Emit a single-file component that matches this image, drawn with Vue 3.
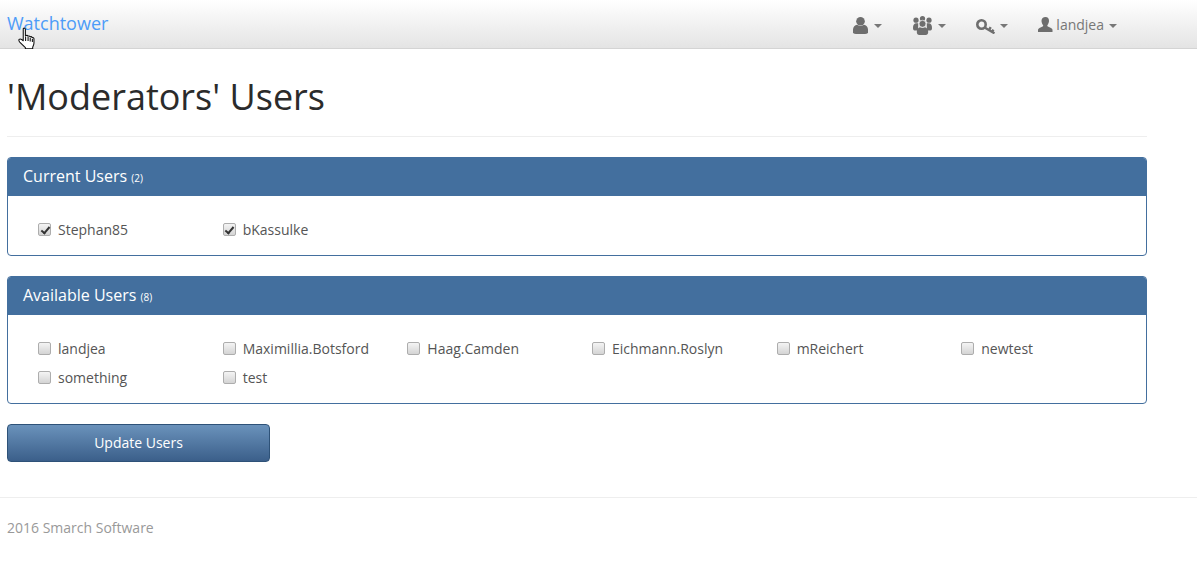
<template>
  <div class="page">
    <!-- navbar -->
    <nav class="navbar">
      <a class="brand">Watchtower</a>
      <svg class="cursor" width="18" height="22" viewBox="0 0 16 20.500">
        <path d="M4.500 1.500c.8-.8 2-.4 2 .8v6l.6-.3c.7-.3 1.500-.1 1.800.5.7-.3 1.600-.1 1.900.6.800-.3 1.700 0 2 .7.800-.2 1.700.3 1.700 1.200v4c0 1.500-.6 2.500-1.200 3.700v1.500H6.500v-1L1.200 14c-.8-1-1.100-1.700-.5-2.400.6-.6 1.600-.4 2.300.1l1.500 1.100V2.300z" fill="#fff" stroke="#111" stroke-width="1" stroke-linejoin="round"/>
        <path d="M6.700 9v4M9 9v4M11 10v3.500M13 11v3" stroke="#111" stroke-width="1" fill="none"/>
      </svg>
      <ul class="nav">
        <li class="nav-item first">
          <svg class="icon person" width="15" height="17" viewBox="0 0 15 17"><circle cx="7.500" cy="4.300" r="4.300" fill="#6e6e6e"/><path d="M0 16v-3.500C0 10 2 8.300 4 7.800c2 1.500 5 1.500 7 0 2 .5 4 2.200 4 4.700V16c-.8.600-2 1-3 1H3c-1 0-2.200-.4-3-1z" fill="#6e6e6e"/></svg>
          <span class="caret"></span>
        </li>
        <li class="nav-item">
          <svg class="icon people" width="19" height="19" viewBox="0 0 19 19">
            <g fill="#6e6e6e">
              <circle cx="3" cy="4.200" r="2.600"/>
              <circle cx="9.500" cy="2.600" r="2.600"/>
              <circle cx="16" cy="4.200" r="2.600"/>
              <path d="M0 12c0-3 1-4.500 2.800-4.800h2.500L5 14.500H1.500C.5 14.500 0 13.500 0 12zM19 12c0-3-1-4.500-2.800-4.800h-2.500l.3 7.300h3.500c1 0 1.500-1 1.500-2.500z"/>
            </g>
            <circle cx="9.500" cy="7.800" r="3.500" fill="#6e6e6e" stroke="#eee" stroke-width=".8"/>
            <path d="M3.800 16c0-3 1.500-4.500 3.200-4.800 1.500 1 3.500 1 5 0 1.700.3 3.200 1.800 3.200 4.800 0 2-1 3-2.500 3H6.300c-1.500 0-2.500-1-2.500-3z" fill="#6e6e6e"/>
          </svg>
          <span class="caret"></span>
        </li>
        <li class="nav-item">
          <svg class="icon key" width="19" height="15" viewBox="0 0 19 15"><circle cx="5.500" cy="5.500" r="4.200" fill="none" stroke="#6e6e6e" stroke-width="2.600"/><path d="M9 8.800l9.500 5.500M13 11.200l1.700-3M16 13l1.400-2.400" fill="none" stroke="#6e6e6e" stroke-width="2.400"/></svg>
          <span class="caret short"></span>
        </li>
        <li class="nav-item">
          <svg class="icon account" width="15" height="15" viewBox="0 0 15 15"><path d="M7.500 0c2.300 0 3.500 1.700 3.500 3.800 0 1.600-.7 3.300-1.500 4.200-.4.500-.2 1.200.4 1.500l3.100 1.500c1 .5 1.500 1.200 1.500 2V15H0v-2c0-.8.500-1.500 1.500-2l3.100-1.500c.6-.3.800-1 .4-1.500C4.200 7.100 3.500 5.400 3.500 3.800 3.500 1.700 5.200 0 7.500 0z" fill="#6e6e6e"/></svg>
          <span class="name">landjea</span>
          <span class="caret short"></span>
        </li>
      </ul>
    </nav>

    <main class="content">
      <h1 class="title">'Moderators' Users</h1>

      <section v-for="group in groups" :key="group.title" class="panel">
        <div class="panel-heading">
          {{ group.title }} <small>({{ group.users.length }})</small>
        </div>
        <div class="panel-body">
          <label v-for="user in group.users" :key="user" class="user">
            <input type="checkbox" :checked="group.checked" />
            <span>{{ user }}</span>
          </label>
        </div>
      </section>

      <button class="update">Update Users</button>
    </main>

    <footer class="footer">2016 Smarch Software</footer>
  </div>
</template>

<script setup>
const groups = [
  { title: 'Current Users', checked: true, users: ['Stephan85', 'bKassulke'] },
  {
    title: 'Available Users',
    checked: false,
    users: ['landjea', 'Maximillia.Botsford', 'Haag.Camden', 'Eichmann.Roslyn', 'mReichert', 'newtest', 'something', 'test']
  }
]
</script>

<style>
html, body {
  margin: 0;
  background: #fff;
}
</style>

<style scoped>
.page {
  font-family: "Open Sans", "Liberation Sans", sans-serif;
  font-size: 14px;
  color: #555;
  height: 568px;
  overflow: hidden;
  position: relative;
}

.navbar {
  height: 48px;
  border-bottom: 1px solid #d4d4d4;
  background: linear-gradient(#fff, #e4e4e4);
  display: flex;
  align-items: center;
  padding-left: 7px;
  position: relative;
}

.brand {
  font-size: 18px;
  color: #4d9cf8;
  margin-bottom: 2px;
}

.cursor {
  position: absolute;
  left: 18px;
  top: 27px;
}

.nav {
  list-style: none;
  margin: 0 0 0 auto;
  padding: 0 80px 0 0;
  display: flex;
  align-items: center;
  gap: 30px;
}

.nav-item {
  display: flex;
  align-items: center;
  color: #777;
}

.first { margin-right: 1px; }

.person { margin-top: 3px; }
.people { margin-top: 3px; }
.key { margin-top: 5px; }
.account { margin-top: 1px; }

.name {
  margin-left: 3.500px;
}

.caret {
  margin: 3px 0 0 6px;
  border-top: 4px solid #777;
  border-left: 4px solid transparent;
  border-right: 4px solid transparent;
}

.caret.short {
  margin-left: 5px;
}

.content {
  width: 1140px;
  margin-left: 7px;
}

.title {
  font-size: 36px;
  font-weight: 400;
  line-height: 40px;
  color: #2b2b2b;
  margin: 0 0 20px;
  padding: 28px 0 19px;
  border-bottom: 1px solid #eee;
}

.panel {
  border: 1px solid #436f9e;
  border-radius: 4px;
  margin-bottom: 20px;
  overflow: hidden;
}

.panel-heading {
  background: #436f9e;
  color: #fff;
  font-size: 16px;
  line-height: 22px;
  padding: 7px 15px 9px;
}

.panel-heading small {
  font-size: 10px;
  line-height: 1;
}

.panel-body {
  padding: 19px 15px 11px;
  display: grid;
  grid-template-columns: repeat(6, 184.67px);
}

.user {
  display: flex;
  align-items: center;
  height: 29px;
  padding-left: 15px;
}

.user input {
  appearance: none;
  width: 13px;
  height: 13px;
  margin: 0 7px 0 0;
  border: 1px solid #adadad;
  border-radius: 2px;
  background: linear-gradient(#f4f4f4, #d4d4d4);
  position: relative;
  flex: none;
}

.user input:checked::after {
  content: "";
  position: absolute;
  left: 3.500px;
  top: .5px;
  width: 3px;
  height: 7px;
  border: solid #333;
  border-width: 0 2px 2px 0;
  transform: rotate(40deg);
}

.update {
  display: block;
  width: 263px;
  height: 38px;
  border: 1px solid #2e5278;
  border-radius: 4px;
  background: linear-gradient(#6a92bb, #3b5f8a);
  color: #fff;
  font-family: inherit;
  font-size: 14px;
  padding: 0 0 2px;
}

.footer {
  margin-top: 35px;
  border-top: 1px solid #eee;
  padding: 20px 7px;
  line-height: 20px;
  color: #999;
}
</style>
